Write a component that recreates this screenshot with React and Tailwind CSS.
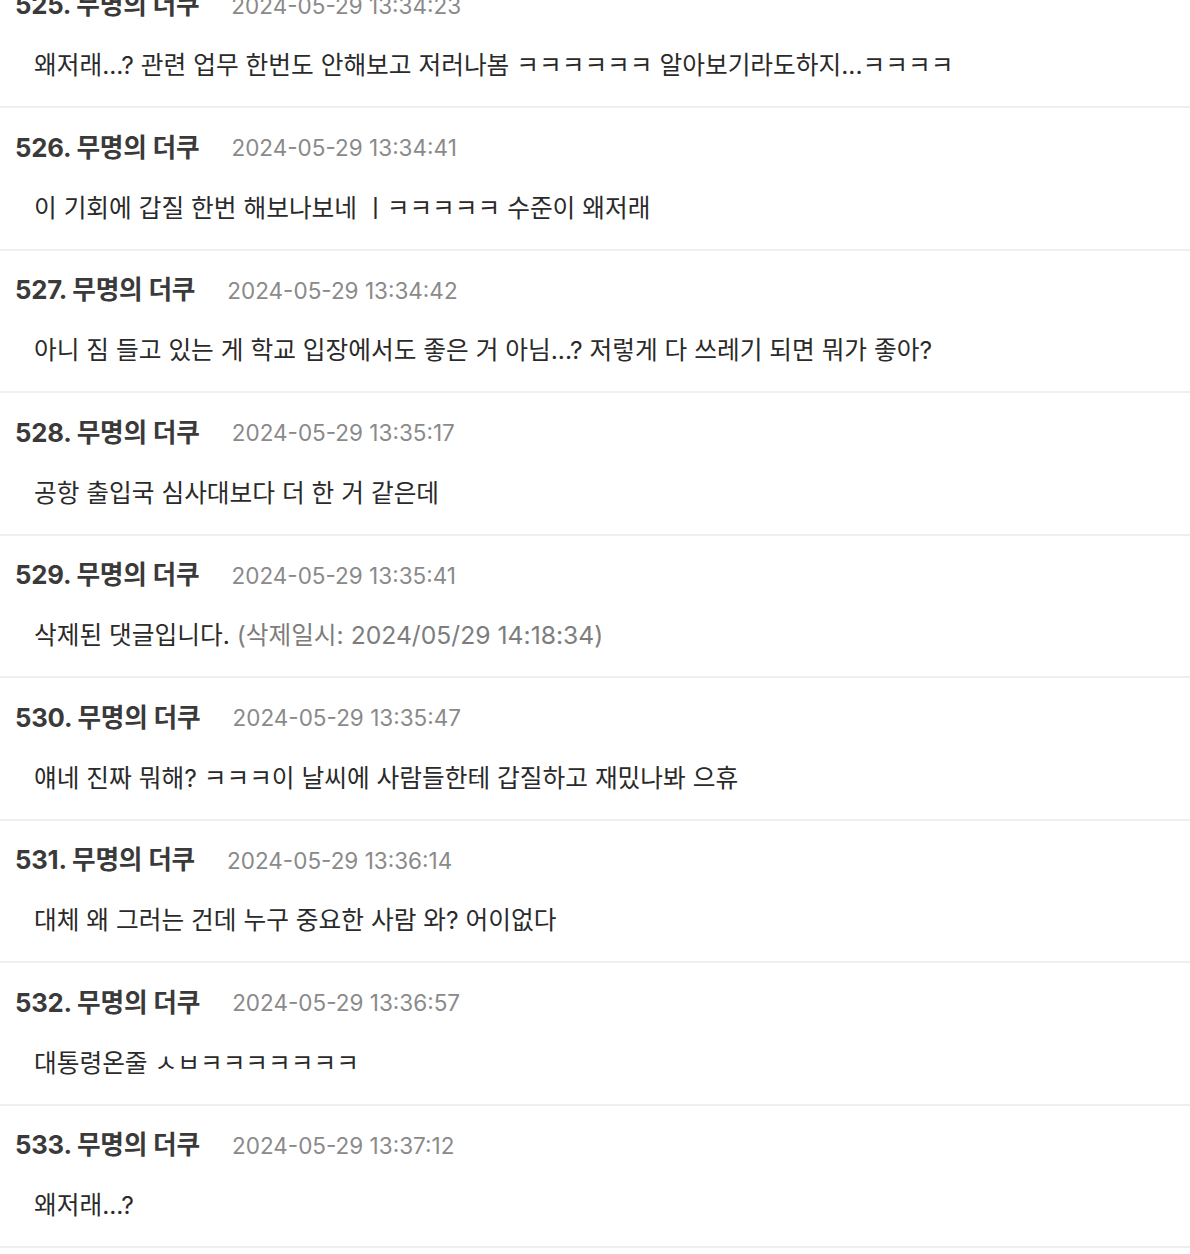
import React from 'react';

const comments = [
  { no: 525, at: '2024-05-29 13:34:23', body: '왜저래...? 관련 업무 한번도 안해보고 저러나봄 ㅋㅋㅋㅋㅋㅋ 알아보기라도하지...ㅋㅋㅋㅋ' },
  { no: 526, at: '2024-05-29 13:34:41', body: '이 기회에 갑질 한번 해보나보네  ㅣㅋㅋㅋㅋㅋ 수준이 왜저래' },
  { no: 527, at: '2024-05-29 13:34:42', body: '아니 짐 들고 있는 게 학교 입장에서도 좋은 거 아님...? 저렇게 다 쓰레기 되면 뭐가 좋아?' },
  { no: 528, at: '2024-05-29 13:35:17', body: '공항 출입국 심사대보다 더 한 거 같은데' },
  { no: 529, at: '2024-05-29 13:35:41', body: '삭제된 댓글입니다.', deletedAt: '2024/05/29 14:18:34' },
  { no: 530, at: '2024-05-29 13:35:47', body: '얘네 진짜 뭐해? ㅋㅋㅋ이 날씨에 사람들한테 갑질하고 재밌나봐 으휴' },
  { no: 531, at: '2024-05-29 13:36:14', body: '대체 왜 그러는 건데 누구 중요한 사람 와? 어이없다' },
  { no: 532, at: '2024-05-29 13:36:57', body: '대통령온줄 ㅅㅂㅋㅋㅋㅋㅋㅋㅋ' },
  { no: 533, at: '2024-05-29 13:37:12', body: '왜저래...?' },
];

function Comment({ c }) {
  return (
    <div className="h-[142.5px] border-b-2 border-[#efefef] px-[15px] pt-[22px] flex flex-col">
      <div className="flex items-center h-9 whitespace-nowrap">
        <span className="text-[25.7px] font-bold text-[#3a3a3a] tracking-[-0.2px]">
          {c.no}. 무명의 더쿠
        </span>
        <span className="ml-[32px] text-[22.5px] text-[#8a8a8a]">{c.at}</span>
      </div>
      <p className="mt-[23.5px] pl-[19px] h-9 leading-9 text-[24.7px] text-[#2a2a2a] whitespace-nowrap">
        {c.body}
        {c.deletedAt && (
          <span className="text-[#7d7d7d]"> (삭제일시: {c.deletedAt})</span>
        )}
      </p>
    </div>
  );
}

export default function App() {
  return (
    <div
      className="w-[1190px] h-[1254px] overflow-hidden bg-white"
      style={{ fontFamily: 'Inter, "Noto Sans CJK KR", sans-serif' }}
    >
      <div className="-mt-[34.5px]">
        {comments.map((c) => (
          <Comment key={c.no} c={c} />
        ))}
      </div>
    </div>
  );
}
